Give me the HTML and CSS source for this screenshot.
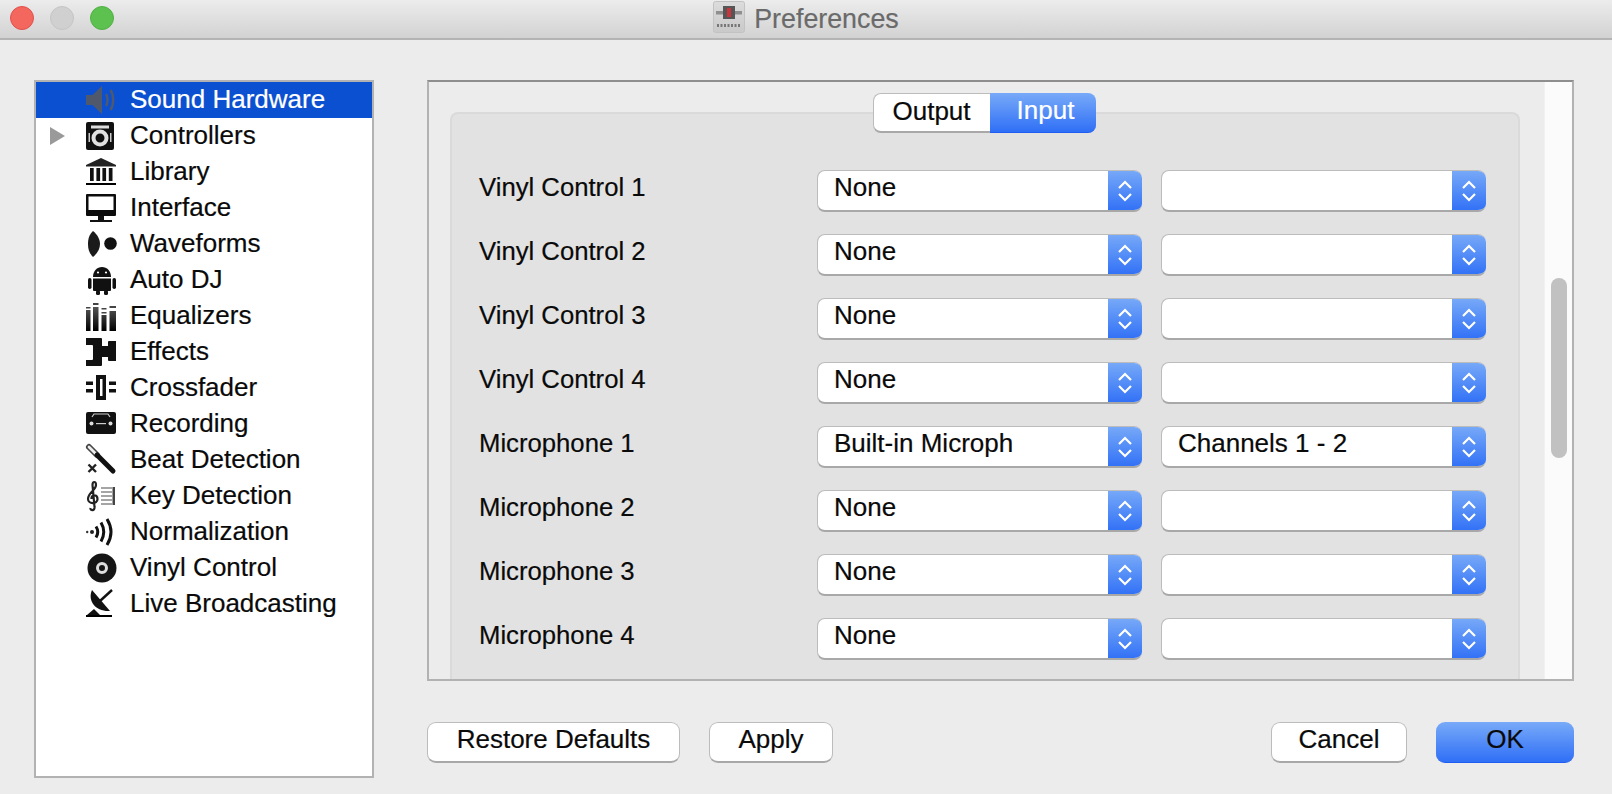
FILE: index.html
```html
<!DOCTYPE html>
<html lang="en">
<head>
<meta charset="utf-8">
<title>Preferences</title>
<link rel="stylesheet" href="styles.css">
</head>
<body>
<div class="window">
  <header class="titlebar">
    <div class="lights">
      <span class="light red"></span>
      <span class="light gray"></span>
      <span class="light green"></span>
    </div>
    <svg class="app-icon" viewBox="0 0 32 32">
      <defs><linearGradient id="appbg" x1="0" y1="0" x2="0" y2="1"><stop offset="0" stop-color="#dcdcdc"/><stop offset="1" stop-color="#c9c9c9"/></linearGradient></defs>
      <rect x="0.5" y="0.5" width="31" height="31" rx="2" fill="url(#appbg)" stroke="#c2c2c2"/>
      <rect x="3" y="10" width="26" height="3.5" fill="#8f8f8f"/>
      <rect x="10" y="5" width="12" height="13" fill="#565656"/>
      <rect x="14" y="7" width="4" height="9" fill="#c9353a"/>
      <path d="M4 24.500H28" stroke="#777" stroke-width="3" stroke-dasharray="2 1.500" fill="none"/>
    </svg>
    <span class="title">Preferences</span>
  </header>
  <main class="content">
    <nav class="tree">
      <div class="tree-row selected">
        <span class="arrow-slot"></span>
        <svg class="icon" viewBox="0 0 30 30"><path d="M0 10H6.500L16 1V29L6.500 20H0Z" fill="#50596c"/><path d="M20 9C22 12 22 18 20 21M24.500 5C28 10 28 20 24.500 25" fill="none" stroke="#50596c" stroke-width="2.400"/></svg>
        <span class="row-text">Sound Hardware</span>
      </div>
      <div class="tree-row">
        <span class="arrow-slot"><span class="arrow"></span></span>
        <svg class="icon" viewBox="0 0 30 30"><rect x="0" y="1" width="28" height="28" rx="2" fill="#111"/><rect x="5" y="4.500" width="18" height="3" fill="#ddd"/><circle cx="14" cy="17" r="6.500" fill="none" stroke="#e2e2e2" stroke-width="4"/><rect x="2.500" y="12" width="1.500" height="9" fill="#ccc"/><rect x="24" y="12" width="1.500" height="9" fill="#ccc"/></svg>
        <span class="row-text">Controllers</span>
      </div>
      <div class="tree-row">
        <span class="arrow-slot"></span>
        <svg class="icon" viewBox="0 0 30 30"><path d="M15 1L30 8V9.500H0V8Z" fill="#222"/><path d="M4 11h3.700v13H4zM10.400 11h3.700v13h-3.700zM16.400 11h3.700v13h-3.700zM22.800 11h3.700v13h-3.700z" fill="#111"/><rect x="0" y="26" width="30" height="2" fill="#000"/></svg>
        <span class="row-text">Library</span>
      </div>
      <div class="tree-row">
        <span class="arrow-slot"></span>
        <svg class="icon" viewBox="0 0 30 30"><path d="M1 1H29Q30 1 30 2V22Q30 23 29 23H1Q0 23 0 22V2Q0 1 1 1ZM2.500 3.500V17H27.500V3.500Z" fill="#0c0c0c" fill-rule="evenodd"/><rect x="12" y="23" width="6" height="4" fill="#111"/><rect x="4" y="27" width="22" height="2" fill="#111"/></svg>
        <span class="row-text">Interface</span>
      </div>
      <div class="tree-row">
        <span class="arrow-slot"></span>
        <svg class="icon" viewBox="0 0 30 30"><path d="M7 2C12 6 14 11 14 15S12 24 7 28C3 24 2 20 2 15S3 6 7 2Z" fill="#1a1a1a"/><circle cx="24.500" cy="14.500" r="6.300" fill="#111"/></svg>
        <span class="row-text">Waveforms</span>
      </div>
      <div class="tree-row">
        <span class="arrow-slot"></span>
        <svg class="icon" viewBox="0 0 30 30"><path d="M7 12C7 6 11 2 16 2S25 6 25 12Z" fill="#111"/><circle cx="12" cy="7.500" r="1.100" fill="#fff"/><circle cx="20" cy="7.500" r="1.100" fill="#fff"/><path d="M7 13.500H25V25Q25 26 24 26H8Q7 26 7 25Z" fill="#111"/><rect x="2" y="13" width="3.500" height="11" rx="1.700" fill="#111"/><rect x="26.500" y="13" width="3.500" height="11" rx="1.700" fill="#111"/><rect x="10" y="25" width="4" height="5" rx="1.500" fill="#111"/><rect x="18" y="25" width="4" height="5" rx="1.500" fill="#111"/></svg>
        <span class="row-text">Auto DJ</span>
      </div>
      <div class="tree-row">
        <span class="arrow-slot"></span>
        <svg class="icon" viewBox="0 0 30 30">
          <defs><linearGradient id="eq" x1="0" y1="0" x2="0" y2="1"><stop offset="0" stop-color="#555"/><stop offset="1" stop-color="#000"/></linearGradient></defs>
          <path d="M0 9h4.500v21H0zM7 6h5.500v24H7zM15.500 14h5v16h-5zM23.500 10h6.500v20h-6.500z" fill="url(#eq)"/>
          <path d="M0 6h4.500v1.500H0zM7 2h5.500v2H7zM15.500 7h5v1.500h-5zM15.500 11h5v1.500h-5zM23.500 5h6.500v2h-6.500z" fill="#444"/>
        </svg>
        <span class="row-text">Equalizers</span>
      </div>
      <div class="tree-row">
        <span class="arrow-slot"></span>
        <svg class="icon" viewBox="0 0 30 30"><path d="M0 1H15Q16 1 16 2V9H22V5Q22 4 23 4H30V24H23Q22 24 22 23V20H16V28Q16 29 15 29H0V23H6Q7 23 7 22V9Q7 8 6 8H0Z" fill="#111"/></svg>
        <span class="row-text">Effects</span>
      </div>
      <div class="tree-row">
        <span class="arrow-slot"></span>
        <svg class="icon" viewBox="0 0 30 30"><path d="M0 8.500h7v3.500H0zM0 16h7v3.500H0zM23 8.500h7v3.500h-7zM23 16h7v3.500h-7z" fill="#111"/><path d="M10 2H20V27H10ZM14 6V23H16.500V6Z" fill="#111" fill-rule="evenodd"/></svg>
        <span class="row-text">Crossfader</span>
      </div>
      <div class="tree-row">
        <span class="arrow-slot"></span>
        <svg class="icon" viewBox="0 0 30 30"><path d="M2 3H28Q30 3 30 5V23Q30 25 28 25H2Q0 25 0 23V5Q0 3 2 3Z" fill="#111"/><path d="M6 8L8 5H22L24 8" fill="none" stroke="#ccc" stroke-width="1.200"/><circle cx="5.500" cy="14.500" r="2" fill="#ddd"/><circle cx="24.500" cy="14.500" r="2" fill="#ddd"/><rect x="10" y="14" width="10" height="1.200" fill="#ccc"/></svg>
        <span class="row-text">Recording</span>
      </div>
      <div class="tree-row">
        <span class="arrow-slot"></span>
        <svg class="icon" viewBox="0 0 30 30"><path d="M3 2L11 10" stroke="#444" stroke-width="6" stroke-linecap="round"/><path d="M3 2L11 10" stroke="#eee" stroke-width="2.800" stroke-linecap="round"/><path d="M11 10L27 26" stroke="#111" stroke-width="5" stroke-linecap="round"/><path d="M2.500 19.500L10 27M10 19.500L2.500 27" stroke="#222" stroke-width="2.400"/></svg>
        <span class="row-text">Beat Detection</span>
      </div>
      <div class="tree-row">
        <span class="arrow-slot"></span>
        <svg class="icon" viewBox="0 0 30 30"><path d="M15 7H26M15 11H26M15 15H26M15 19H26M15 23H26" stroke="#888" stroke-width="1.500"/><rect x="26.500" y="6" width="2.500" height="18" fill="#444"/><path d="M8.500 26L6.500 4C6.500 0 10 0 10 4C10 9 2 12 2 18C2 23 11.500 24 11.500 18C11.500 13 5 13 5.500 18M8.500 26C9 30 4 30 4.500 27" fill="none" stroke="#222" stroke-width="2.200"/></svg>
        <span class="row-text">Key Detection</span>
      </div>
      <div class="tree-row">
        <span class="arrow-slot"></span>
        <svg class="icon" viewBox="0 0 30 30"><circle cx="1.200" cy="15" r="1.200" fill="#333"/><circle cx="6" cy="15" r="2" fill="#222"/><path d="M10 9.500Q13.500 15 10 20.500M15 5.500Q20.500 15 15 24.500M21 2Q29 15 21 28" fill="none" stroke="#111" stroke-width="3"/></svg>
        <span class="row-text">Normalization</span>
      </div>
      <div class="tree-row">
        <span class="arrow-slot"></span>
        <svg class="icon" viewBox="0 0 30 30"><circle cx="16" cy="15" r="14.500" fill="#151515"/><circle cx="16" cy="15" r="4.500" fill="none" stroke="#ddd" stroke-width="3"/></svg>
        <span class="row-text">Vinyl Control</span>
      </div>
      <div class="tree-row">
        <span class="arrow-slot"></span>
        <svg class="icon" viewBox="0 0 30 30"><path d="M6 1C1 12 10 23 24 22Z" fill="#111"/><path d="M14 12L26 1" stroke="#111" stroke-width="2.400"/><path d="M8 20L1 26H14Z" fill="#111"/><rect x="0" y="26" width="26" height="2" fill="#000"/></svg>
        <span class="row-text">Live Broadcasting</span>
      </div>
    </nav>
    <section class="right">
      <div class="panel">
        <div class="pane">
          <div class="group">
            <div class="tabs">
              <span class="tab">Output</span>
              <span class="tab active">Input</span>
            </div>
            <div class="grid">
              <span class="label">Vinyl Control 1</span>
              <div class="select"><span class="value">None</span><span class="stepper"><svg class="chevrons" viewBox="0 0 16 24"><path d="M2 9L8 3L14 9M2 15L8 21L14 15"/></svg></span></div>
              <div class="select"><span class="value"></span><span class="stepper"><svg class="chevrons" viewBox="0 0 16 24"><path d="M2 9L8 3L14 9M2 15L8 21L14 15"/></svg></span></div>
              <span class="label">Vinyl Control 2</span>
              <div class="select"><span class="value">None</span><span class="stepper"><svg class="chevrons" viewBox="0 0 16 24"><path d="M2 9L8 3L14 9M2 15L8 21L14 15"/></svg></span></div>
              <div class="select"><span class="value"></span><span class="stepper"><svg class="chevrons" viewBox="0 0 16 24"><path d="M2 9L8 3L14 9M2 15L8 21L14 15"/></svg></span></div>
              <span class="label">Vinyl Control 3</span>
              <div class="select"><span class="value">None</span><span class="stepper"><svg class="chevrons" viewBox="0 0 16 24"><path d="M2 9L8 3L14 9M2 15L8 21L14 15"/></svg></span></div>
              <div class="select"><span class="value"></span><span class="stepper"><svg class="chevrons" viewBox="0 0 16 24"><path d="M2 9L8 3L14 9M2 15L8 21L14 15"/></svg></span></div>
              <span class="label">Vinyl Control 4</span>
              <div class="select"><span class="value">None</span><span class="stepper"><svg class="chevrons" viewBox="0 0 16 24"><path d="M2 9L8 3L14 9M2 15L8 21L14 15"/></svg></span></div>
              <div class="select"><span class="value"></span><span class="stepper"><svg class="chevrons" viewBox="0 0 16 24"><path d="M2 9L8 3L14 9M2 15L8 21L14 15"/></svg></span></div>
              <span class="label">Microphone 1</span>
              <div class="select"><span class="value">Built-in Microph</span><span class="stepper"><svg class="chevrons" viewBox="0 0 16 24"><path d="M2 9L8 3L14 9M2 15L8 21L14 15"/></svg></span></div>
              <div class="select"><span class="value">Channels 1 - 2</span><span class="stepper"><svg class="chevrons" viewBox="0 0 16 24"><path d="M2 9L8 3L14 9M2 15L8 21L14 15"/></svg></span></div>
              <span class="label">Microphone 2</span>
              <div class="select"><span class="value">None</span><span class="stepper"><svg class="chevrons" viewBox="0 0 16 24"><path d="M2 9L8 3L14 9M2 15L8 21L14 15"/></svg></span></div>
              <div class="select"><span class="value"></span><span class="stepper"><svg class="chevrons" viewBox="0 0 16 24"><path d="M2 9L8 3L14 9M2 15L8 21L14 15"/></svg></span></div>
              <span class="label">Microphone 3</span>
              <div class="select"><span class="value">None</span><span class="stepper"><svg class="chevrons" viewBox="0 0 16 24"><path d="M2 9L8 3L14 9M2 15L8 21L14 15"/></svg></span></div>
              <div class="select"><span class="value"></span><span class="stepper"><svg class="chevrons" viewBox="0 0 16 24"><path d="M2 9L8 3L14 9M2 15L8 21L14 15"/></svg></span></div>
              <span class="label">Microphone 4</span>
              <div class="select"><span class="value">None</span><span class="stepper"><svg class="chevrons" viewBox="0 0 16 24"><path d="M2 9L8 3L14 9M2 15L8 21L14 15"/></svg></span></div>
              <div class="select"><span class="value"></span><span class="stepper"><svg class="chevrons" viewBox="0 0 16 24"><path d="M2 9L8 3L14 9M2 15L8 21L14 15"/></svg></span></div>
            </div>
          </div>
        </div>
        <div class="track"><div class="thumb"></div></div>
      </div>
      <div class="actions">
        <button class="btn restore">Restore Defaults</button>
        <button class="btn apply">Apply</button>
        <span class="spacer"></span>
        <button class="btn cancel">Cancel</button>
        <button class="btn ok">OK</button>
      </div>
    </section>
  </main>
</div>
</body>
</html>
```

FILE: styles.css
```css
* { box-sizing: border-box; }
html, body { margin: 0; padding: 0; height: 100%; overflow: hidden; }
body {
  background: #ececec;
  color: #0a0a0a;
  font-family: "Liberation Sans", Arial, sans-serif;
  font-size: 26px;
  -webkit-text-stroke: 0.2px;
}
.window { width: 1612px; height: 794px; display: flex; flex-direction: column; }

/* title bar */
.titlebar {
  height: 40px;
  flex: none;
  display: flex;
  align-items: center;
  justify-content: center;
  position: relative;
  background: linear-gradient(#ececec, #d2d2d2);
  border-bottom: 2px solid #b4b4b4;
}
.lights { position: absolute; left: 10px; top: 6px; display: flex; gap: 16px; }
.light { width: 24px; height: 24px; border-radius: 50%; border: 1px solid; }
.red { background: #f3675f; border-color: #e2504a; }
.gray { background: #d0d0d0; border-color: #c5c5c5; }
.green { background: #5dc14f; border-color: #52b045; }
.app-icon { width: 32px; height: 32px; margin-right: 9px; margin-bottom: 4px; }
.title { color: #6a6a6a; font-size: 26.8px; line-height: 38px; }

/* body */
.content { display: flex; padding: 40px 38px 0 34px; }

/* tree */
.tree {
  width: 340px;
  height: 698px;
  flex: none;
  background: #fff;
  border: 2px solid #b2b2b2;
}
.tree-row {
  height: 36px;
  display: flex;
  align-items: center;
  padding-left: 14px;
  line-height: 32px;
  white-space: nowrap;
}
.row-text { margin-top: -2px; }
.tree-row.selected { background: #0b50d1; color: #fff; }
.arrow-slot { width: 36px; flex: none; display: flex; align-items: center; }
.arrow {
  width: 0; height: 0;
  border-left: 15px solid #9a9a9a;
  border-top: 9px solid transparent;
  border-bottom: 9px solid transparent;
}
.icon { width: 30px; height: 30px; flex: none; margin-right: 14px; overflow: visible; }

/* right column */
.right { margin-left: 53px; width: 1147px; flex: none; }
.panel {
  height: 601px;
  display: flex;
  border: 2px solid #b2b2b2;
  border-top-color: #8e8e8e;
  overflow: hidden;
}
.pane { flex: 1; padding: 30px 24px 0 21px; min-width: 0; }
.group {
  height: 600px;
  background: #e2e2e2;
  border: 2px solid #dadada;
  border-bottom: 0;
  border-radius: 8px 8px 0 0;
  display: flex;
  flex-direction: column;
  align-items: center;
}
.tabs {
  display: flex;
  width: 223px;
  height: 40px;
  margin: -21px 2px 0 0;
  flex: none;
  line-height: 34px;
  text-align: center;
}
.tab {
  width: 117px;
  background: #fff;
  border: 1px solid #bcbcbc;
  border-right: 0;
  border-bottom: 2px solid #a8a8a8;
  border-radius: 8px 0 0 8px;
}
.tab.active {
  width: 106px;
  padding-left: 6px;
  color: #fff;
  background: linear-gradient(#78aaf8, #2f6ff6);
  border: 0;
  border-bottom: 1px solid #1f5ef0;
  border-radius: 0 8px 8px 0;
}
.grid {
  width: 100%;
  margin-top: 37px;
  padding-left: 27px;
  display: grid;
  grid-template-columns: 319px 325px 325px;
  column-gap: 19px;
  row-gap: 22px;
  grid-auto-rows: 42px;
  justify-content: start;
}
.label { font-size: 25.7px; line-height: 34px; white-space: nowrap; }
.select {
  width: 325px;
  height: 42px;
  display: flex;
  background: #fff;
  border: 1px solid #bcbcbc;
  border-bottom: 2px solid #a8a8a8;
  border-right: 0;
  border-radius: 8px;
  overflow: hidden;
}
.value {
  flex: 1;
  padding-left: 16px;
  line-height: 32px;
  white-space: nowrap;
  overflow: hidden;
}
.stepper {
  width: 34px;
  flex: none;
  margin: -1px 0 -2px;
  display: flex;
  align-items: center;
  justify-content: center;
  background: linear-gradient(#78aaf8, #2f6ff6);
}
.chevrons { width: 16px; height: 24px; fill: none; stroke: #fff; stroke-width: 2.2; }

/* scrollbar */
.track {
  width: 28px;
  flex: none;
  background: #fbfbfb;
  padding: 196px 6px 0;
  border-left: 1px solid #f1f1f1;
}
.thumb { width: 16px; height: 180px; border-radius: 8px; background: #c1c1c1; }

/* buttons */
.actions { display: flex; margin-top: 41px; }
.spacer { flex: 1; }
.btn {
  height: 41px;
  padding: 0 0 7px;
  font: inherit;
  line-height: 32px;
  color: #0a0a0a;
  background: #fff;
  border: 1px solid #bcbcbc;
  border-bottom: 2px solid #a8a8a8;
  border-radius: 9px;
}
.restore { width: 253px; }
.apply { width: 124px; margin-left: 29px; }
.cancel { width: 136px; margin-right: 29px; }
.ok {
  width: 138px;
  background: linear-gradient(#78aaf8, #2f6ff6);
  border: 0;
  border-bottom: 1px solid #1f5ef0;
}
```
